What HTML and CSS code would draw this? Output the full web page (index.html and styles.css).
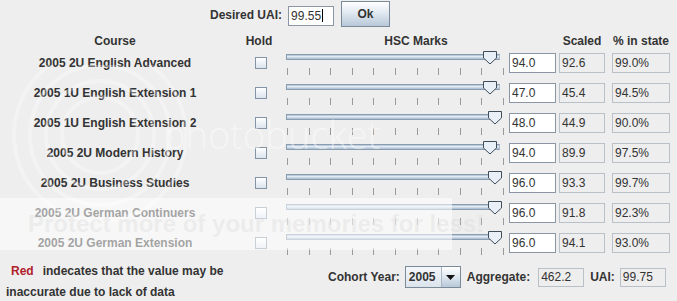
FILE: index.html
```html
<!DOCTYPE html>
<html lang="en">
<head>
    <meta charset="UTF-8">
    <title>UAI Calculator</title>
    <link rel="stylesheet" href="styles.css">
</head>
<body>
    <div class="panel">
        <div class="top">
            <span class="top-label">Desired UAI:</span>
            <div class="field edit target">99.55<span class="caret"></span></div>
            <button class="btn">Ok</button>
        </div>

        <div class="row head">
            <div class="course">Course</div>
            <div class="hold">Hold</div>
            <div class="marks-head">HSC Marks</div>
            <div class="scaled-head">Scaled</div>
            <div class="pct-head">% in state</div>
        </div>

        <div class="row">
            <div class="course">2005 2U English Advanced</div>
            <div class="hold"><span class="check"></span></div>
            <div class="slider"><div class="track"></div><div class="ticks"><i></i><i></i><i></i><i></i><i></i><i></i><i></i><i></i><i></i><i></i><i></i></div><svg class="thumb" width="16" height="15" viewBox="0 0 16 15"><path d="M1.5 1.5 H14.5 V8 L8 14 L1.5 8 Z"/></svg></div>
            <div class="field edit mark">94.0</div>
            <div class="field ro scaled">92.6</div>
            <div class="field ro pct">99.0%</div>
        </div>

        <div class="row">
            <div class="course">2005 1U English Extension 1</div>
            <div class="hold"><span class="check"></span></div>
            <div class="slider"><div class="track"></div><div class="ticks"><i></i><i></i><i></i><i></i><i></i><i></i><i></i><i></i><i></i><i></i><i></i></div><svg class="thumb" width="16" height="15" viewBox="0 0 16 15"><path d="M1.5 1.5 H14.5 V8 L8 14 L1.5 8 Z"/></svg></div>
            <div class="field edit mark">47.0</div>
            <div class="field ro scaled">45.4</div>
            <div class="field ro pct">94.5%</div>
        </div>

        <div class="row">
            <div class="course">2005 1U English Extension 2</div>
            <div class="hold"><span class="check"></span></div>
            <div class="slider"><div class="track"></div><div class="ticks"><i></i><i></i><i></i><i></i><i></i><i></i><i></i><i></i><i></i><i></i><i></i></div><svg class="thumb max" width="16" height="15" viewBox="0 0 16 15"><path d="M1.5 1.5 H14.5 V8 L8 14 L1.5 8 Z"/></svg></div>
            <div class="field edit mark">48.0</div>
            <div class="field ro scaled">44.9</div>
            <div class="field ro pct">90.0%</div>
        </div>

        <div class="row">
            <div class="course">2005 2U Modern History</div>
            <div class="hold"><span class="check"></span></div>
            <div class="slider"><div class="track"></div><div class="ticks"><i></i><i></i><i></i><i></i><i></i><i></i><i></i><i></i><i></i><i></i><i></i></div><svg class="thumb" width="16" height="15" viewBox="0 0 16 15"><path d="M1.5 1.5 H14.5 V8 L8 14 L1.5 8 Z"/></svg></div>
            <div class="field edit mark">94.0</div>
            <div class="field ro scaled">89.9</div>
            <div class="field ro pct">97.5%</div>
        </div>

        <div class="row">
            <div class="course">2005 2U Business Studies</div>
            <div class="hold"><span class="check"></span></div>
            <div class="slider"><div class="track"></div><div class="ticks"><i></i><i></i><i></i><i></i><i></i><i></i><i></i><i></i><i></i><i></i><i></i></div><svg class="thumb max" width="16" height="15" viewBox="0 0 16 15"><path d="M1.5 1.5 H14.5 V8 L8 14 L1.5 8 Z"/></svg></div>
            <div class="field edit mark">96.0</div>
            <div class="field ro scaled">93.3</div>
            <div class="field ro pct">99.7%</div>
        </div>

        <div class="row">
            <div class="course">2005 2U German Continuers</div>
            <div class="hold"><span class="check"></span></div>
            <div class="slider"><div class="track"></div><div class="ticks"><i></i><i></i><i></i><i></i><i></i><i></i><i></i><i></i><i></i><i></i><i></i></div><svg class="thumb max" width="16" height="15" viewBox="0 0 16 15"><path d="M1.5 1.5 H14.5 V8 L8 14 L1.5 8 Z"/></svg></div>
            <div class="field edit mark">96.0</div>
            <div class="field ro scaled">91.8</div>
            <div class="field ro pct">92.3%</div>
        </div>

        <div class="row">
            <div class="course">2005 2U German Extension</div>
            <div class="hold"><span class="check"></span></div>
            <div class="slider"><div class="track"></div><div class="ticks"><i></i><i></i><i></i><i></i><i></i><i></i><i></i><i></i><i></i><i></i><i></i></div><svg class="thumb max" width="16" height="15" viewBox="0 0 16 15"><path d="M1.5 1.5 H14.5 V8 L8 14 L1.5 8 Z"/></svg></div>
            <div class="field edit mark">96.0</div>
            <div class="field ro scaled">94.1</div>
            <div class="field ro pct">93.0%</div>
        </div>

        <div class="bottom">
            <div class="note">
                <div class="note-line first"><span class="red">Red</span><span>indecates that the value may be</span></div>
                <div class="note-line">inaccurate due to lack of data</div>
            </div>
            <div class="totals">
                <span>Cohort Year:</span>
                <div class="combo">
                    <div class="combo-value">2005</div>
                    <div class="combo-arrow"><svg width="9" height="5" viewBox="0 0 9 5"><path d="M0 0 H9 L4.5 5 Z"/></svg></div>
                </div>
                <span class="agg-label">Aggregate:</span>
                <div class="field ro total">462.2</div>
                <span class="uai-label">UAI:</span>
                <div class="field ro total last">99.75</div>
            </div>
        </div>
    </div>

    <!-- image host watermark laid over the screenshot -->
    <div class="watermark">
        <svg class="wm-logo" width="200" height="160" viewBox="0 0 200 160">
            <circle cx="100" cy="70" r="38"/>
            <circle cx="100" cy="70" r="54"/>
            <circle cx="100" cy="70" r="70"/>
            <circle cx="100" cy="70" r="86"/>
        </svg>
        <div class="wm-word">photobucket</div>
        <div class="wm-band">Protect more of your memories for less!</div>
    </div>
</body>
</html>
```

FILE: styles.css
```css
* {
    margin: 0;
    padding: 0;
    box-sizing: border-box;
}
:root {
    --bg: #eeeeee;
    --text: #333333;
    --edge: #7a8a99;
    --soft-edge: #b9c0c8;
}
body {
    font-family: 'Liberation Sans', Arial, sans-serif;
    font-size: 12px;
    font-weight: bold;
    color: var(--text);
    background: var(--bg);
    width: 677px;
    height: 301px;
    overflow: hidden;
    position: relative;
}

/* top bar */
.top {
    display: flex;
    align-items: flex-start;
    height: 28px;
    padding-left: 210px;
}
.top-label {
    margin-top: 8px;
    line-height: 14px;
}
.target {
    margin-top: 6px;
    margin-left: 6px;
    width: 46px;
    height: 19px;
    line-height: 17px;
}
.caret {
    display: inline-block;
    width: 1px;
    height: 13px;
    background: #000;
    vertical-align: -2px;
    margin-left: 1px;
}
.btn {
    margin-top: 1px;
    margin-left: 7px;
    width: 49px;
    height: 26px;
    font: inherit;
    color: var(--text);
    border: 1px solid var(--edge);
    background: linear-gradient(#ffffff, #dde6ef 50%, #b8c8d8);
}

/* table rows */
.row {
    display: flex;
    align-items: center;
    height: 30px;
}
.row.head {
    height: 20px;
    align-items: flex-start;
    padding-top: 6px;
    line-height: 14px;
}
.course {
    width: 230px;
    text-align: center;
    white-space: nowrap;
}
.hold {
    width: 56px;
}
.head .hold {
    text-align: center;
    padding-left: 2px;
}
.marks-head {
    width: 270px;
    text-align: center;
    padding-right: 10px;
}
.scaled-head {
    width: 46px;
    margin-left: 3px;
    text-align: center;
}
.pct-head {
    width: 58px;
    margin-left: 7px;
    text-align: center;
}
.check {
    display: block;
    width: 12px;
    height: 12px;
    margin-left: 25px;
    border: 1px solid #8594a4;
    background: linear-gradient(#ffffff, #dbe4ee);
}

/* slider */
.slider {
    position: relative;
    width: 219px;
    height: 30px;
    align-self: flex-start;
}
.track {
    margin-top: 6px;
    width: 214px;
    height: 6px;
    border: 1px solid #8a9cb0;
    border-right-color: #b0bcc8;
    background: linear-gradient(#a8bbd0, #e6eef6 40%, #a3b8cc);
}
.ticks {
    display: flex;
    justify-content: space-between;
    width: 217px;
    margin-top: 8px;
    margin-left: 1px;
    height: 7px;
}
.ticks i {
    width: 1px;
    background: #9a9a9a;
}
.thumb {
    position: absolute;
    top: 2px;
    left: 196px;
}
.thumb path {
    fill: #e9eff6;
    stroke: #3f4c5a;
    stroke-width: 1;
}
.thumb.max {
    left: 201px;
}

/* text fields */
.field {
    height: 20px;
    padding: 0 2px;
    line-height: 18px;
    font-weight: normal;
    color: var(--text);
    border: 1px solid var(--soft-edge);
    white-space: nowrap;
}
.field.edit {
    background: #ffffff;
    border-color: #8a96a3;
}
.field.ro {
    background: var(--bg);
}
.mark {
    width: 47px;
    margin-left: 4px;
}
.scaled {
    width: 46px;
    margin-left: 3px;
}
.pct {
    width: 58px;
    margin-left: 7px;
}

/* bottom part */
.bottom {
    display: flex;
    align-items: flex-start;
}
.note {
    width: 328px;
    flex-shrink: 0;
    padding-top: 3px;
    padding-left: 6px;
}
.note-line {
    display: flex;
    line-height: 21px;
    white-space: nowrap;
}
.note-line.first {
    padding-left: 5px;
}
.red {
    color: #b0222c;
    margin-right: 9px;
}
.totals {
    display: flex;
    align-items: center;
    margin-top: 8px;
    height: 22px;
}
.combo {
    display: flex;
    width: 56px;
    height: 22px;
    margin-left: 5px;
    border: 1px solid var(--edge);
}
.combo-value {
    flex: 1;
    padding-left: 3px;
    line-height: 20px;
    background: linear-gradient(#f4f7fa, #dbe3ec);
}
.combo-arrow {
    width: 19px;
    display: flex;
    align-items: center;
    justify-content: center;
    border-left: 1px solid #a9b7c5;
    background: linear-gradient(#ffffff, #dde6ef 50%, #b8c8d8);
}
.combo-arrow path {
    fill: #111;
}
.agg-label {
    margin-left: 6px;
}
.total {
    width: 46px;
    height: 19px;
    line-height: 17px;
    margin-left: 8px;
}
.uai-label {
    margin-left: 6px;
}
.total.last {
    margin-left: 5px;
}

/* watermark */
.watermark {
    position: absolute;
    inset: 0;
    pointer-events: none;
}
.wm-logo {
    position: absolute;
    left: 0;
    top: 65px;
}
.wm-logo circle {
    fill: none;
    stroke: rgba(255, 255, 255, 0.3);
    stroke-width: 4;
}
.wm-word {
    position: absolute;
    left: 163px;
    top: 108px;
    font-family: 'Open Sans', sans-serif;
    font-weight: 300;
    font-size: 38px;
    color: rgba(255, 255, 255, 0.45);
}
.wm-band {
    position: absolute;
    left: 0;
    top: 198px;
    width: 452px;
    height: 52px;
    padding: 12px 0 0 28px;
    background: rgba(255, 255, 255, 0.55);
    font-size: 24px;
    font-weight: bold;
    color: rgba(210, 210, 210, 0.28);
    white-space: nowrap;
}
```
